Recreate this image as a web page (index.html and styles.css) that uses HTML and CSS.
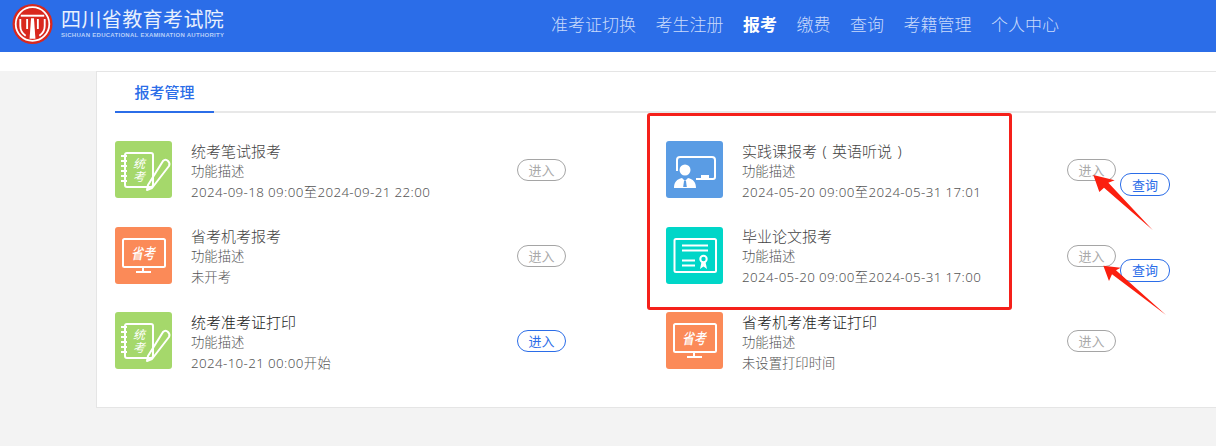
FILE: index.html
```html
<!DOCTYPE html>
<html lang="zh-CN">
<head>
<meta charset="utf-8">
<title>报考管理</title>
<link rel="stylesheet" href="styles.css">
</head>
<body>
<header class="header">
  <div class="brand">
    <svg class="logo" viewBox="0 0 42 42" aria-hidden="true">
      <circle cx="21" cy="21" r="20.5" fill="#d9281e"/>
      <circle cx="21" cy="21" r="17.2" fill="none" stroke="#fff" stroke-width="1.8"/>
      <path d="M9 12.5h24" stroke="#fff" stroke-width="2"/>
      <path d="M8.5 16v7c0 5 2.5 8 5.5 10M15.5 16v10M33.5 16v7c0 5-2.500 8-5.500 10M26.500 16v10" fill="none" stroke="#fff" stroke-width="1.900"/>
      <path d="M19.500 15h3l1.500 21h-6z" fill="#fff"/>
    </svg>
    <div class="brand-text">
      <div class="brand-name">四川省教育考试院</div>
      <div class="brand-en">SICHUAN EDUCATIONAL EXAMINATION AUTHORITY</div>
    </div>
  </div>
  <nav class="nav">
    <a class="nav-item">准考证切换</a>
    <a class="nav-item">考生注册</a>
    <a class="nav-item nav-active">报考</a>
    <a class="nav-item">缴费</a>
    <a class="nav-item">查询</a>
    <a class="nav-item">考籍管理</a>
    <a class="nav-item">个人中心</a>
  </nav>
</header>
<div class="strip"></div>
<main class="main">
  <section class="panel">
    <div class="tabs"><div class="tab">报考管理</div></div>
    <div class="grid">

      <div class="row">
        <div class="icon icon-green">
          <svg viewBox="0 0 57 57" aria-hidden="true">
            <rect x="10" y="12" width="28" height="34" rx="2" class="line"/>
            <path d="M6 15h6M6 20h6M6 25h6M6 30h6M6 35h6M6 40h6" class="line"/>
            <text x="24" y="16" class="glyph glyph-v">统考</text>
            <path d="M33 44l-1 5 5-2 17-22c1-2 0-4-1-5s-3-2-5 0z" class="pencil"/>
          </svg>
        </div>
        <div class="info">
          <div class="title">统考笔试报考</div>
          <div class="desc">功能描述</div>
          <div class="date">2024-09-18 09:00至2024-09-21 22:00</div>
        </div>
        <div class="actions"><button class="btn btn-gray">进入</button></div>
      </div>

      <div class="row">
        <div class="icon icon-blue">
          <svg viewBox="0 0 57 57" aria-hidden="true">
            <path d="M11 30V19c0-2 1-3 3-3h32c2 0 3 1 3 3v17c0 1-.5 2-2 2H30" class="line"/>
            <rect x="35" y="34" width="8" height="3" fill="#fff"/>
            <circle cx="19" cy="29" r="5.500" fill="#fff"/>
            <path d="M8 47c0-6 3-9 8-10l3 3 3-3c5 1 8 4 8 10z" fill="#fff"/>
            <path d="M18 40h2l.800 6h-3.600z" fill="#5a9ce4"/>
          </svg>
        </div>
        <div class="info">
          <div class="title">实践课报考<span class="paren">(</span>英语听说<span class="paren">)</span></div>
          <div class="desc">功能描述</div>
          <div class="date">2024-05-20 09:00至2024-05-31 17:01</div>
        </div>
        <div class="actions">
          <button class="btn btn-gray">进入</button>
          <button class="btn btn-blue btn-query">查询</button>
        </div>
      </div>

      <div class="row">
        <div class="icon icon-orange">
          <svg viewBox="0 0 57 57" aria-hidden="true">
            <rect x="8" y="12" width="42" height="28" rx="1.500" class="line"/>
            <path d="M28 41v3" class="line"/>
            <rect x="21" y="44" width="15" height="2" fill="#fff"/>
            <text x="20" y="32" class="glyph glyph-big" transform="scale(.8 1)">省考</text>
          </svg>
        </div>
        <div class="info">
          <div class="title">省考机考报考</div>
          <div class="desc">功能描述</div>
          <div class="date date-cjk">未开考</div>
        </div>
        <div class="actions"><button class="btn btn-gray">进入</button></div>
      </div>

      <div class="row">
        <div class="icon icon-teal">
          <svg viewBox="0 0 57 57" aria-hidden="true">
            <rect x="8.500" y="12" width="41.500" height="33" rx="1.500" class="line"/>
            <path d="M16 18.500h26M16 23.500h26M16 33.500h13M16 38.500h13" class="line"/>
            <circle cx="37.500" cy="32" r="3.200" class="line"/>
            <path d="M35.500 35l-1.500 7 3.500-2.500 3.500 2.500-1.500-7z" fill="#fff"/>
          </svg>
        </div>
        <div class="info">
          <div class="title">毕业论文报考</div>
          <div class="desc">功能描述</div>
          <div class="date">2024-05-20 09:00至2024-05-31 17:00</div>
        </div>
        <div class="actions">
          <button class="btn btn-gray">进入</button>
          <button class="btn btn-blue btn-query">查询</button>
        </div>
      </div>

      <div class="row">
        <div class="icon icon-green">
          <svg viewBox="0 0 57 57" aria-hidden="true">
            <rect x="10" y="12" width="28" height="34" rx="2" class="line"/>
            <path d="M6 15h6M6 20h6M6 25h6M6 30h6M6 35h6M6 40h6" class="line"/>
            <text x="24" y="16" class="glyph glyph-v">统考</text>
            <path d="M33 44l-1 5 5-2 17-22c1-2 0-4-1-5s-3-2-5 0z" class="pencil"/>
          </svg>
        </div>
        <div class="info">
          <div class="title title-dark">统考准考证打印</div>
          <div class="desc">功能描述</div>
          <div class="date">2024-10-21 00:00开始</div>
        </div>
        <div class="actions"><button class="btn btn-blue">进入</button></div>
      </div>

      <div class="row">
        <div class="icon icon-orange">
          <svg viewBox="0 0 57 57" aria-hidden="true">
            <rect x="8" y="12" width="42" height="28" rx="1.500" class="line"/>
            <path d="M28 41v3" class="line"/>
            <rect x="21" y="44" width="15" height="2" fill="#fff"/>
            <text x="20" y="32" class="glyph glyph-big" transform="scale(.8 1)">省考</text>
          </svg>
        </div>
        <div class="info">
          <div class="title title-dark">省考机考准考证打印</div>
          <div class="desc">功能描述</div>
          <div class="date date-cjk">未设置打印时间</div>
        </div>
        <div class="actions"><button class="btn btn-gray">进入</button></div>
      </div>

    </div>
    <div class="redbox"></div>
    <svg class="arrows" viewBox="0 0 528 540" aria-hidden="true">
      <polygon points="160,90 224,106 205,113 338,255 192,128 178,141" fill="#fb1f0f"/>
      <polygon points="190,362 242,368 228,376 378,510 216,388 207,408" fill="#fb1f0f"/>
    </svg>
  </section>
</main>
</body>
</html>
```

FILE: styles.css
```css
* { box-sizing: border-box; }
html, body { margin: 0; height: 100%; overflow: hidden; }
body {
  background: #f3f3f3;
  font-family: "Noto Sans", "Noto Sans CJK SC", sans-serif;
  color: #555;
}
.header {
  height: 52px;
  background: #2b6de8;
  display: flex;
  align-items: flex-start;
  padding-left: 12px;
}
.brand { display: flex; width: 539px; }
.logo { width: 41px; height: 42px; margin-top: 3px; flex: none; }
.brand-text { margin-left: 8px; color: #e8f0fd; }
.brand-name {
  font-size: 20px;
  line-height: 22px;
  margin-top: 9px;
  letter-spacing: .4px;
  white-space: nowrap;
}
.brand-en {
  font-family: "Liberation Sans", sans-serif;
  font-size: 6px;
  font-weight: 700;
  line-height: 9px;
  letter-spacing: .28px;
  white-space: nowrap;
  color: #b9d0f8;
}
.nav {
  display: flex;
  gap: 19.500px;
  font-size: 17px;
  font-weight: 300;
  line-height: 49px;
  color: #c8dafb;
}
.nav-active { color: #fff; font-weight: 700; }
.strip { height: 19px; background: #fff; }
.main { padding-left: 96px; }
.panel {
  position: relative;
  height: 337px;
  background: #fff;
  border: 1px solid #e5e5e5;
  border-right: 0;
  padding-left: 18px;
}
.tabs {
  height: 41px;
  border-bottom: 2px solid #e8e8e8;
  display: flex;
}
.tab {
  width: 99px;
  height: 41px;
  border-bottom: 2px solid #2b6de8;
  color: #2b6de8;
  font-size: 15px;
  font-weight: 500;
  line-height: 41px;
  text-align: center;
}
.grid {
  display: grid;
  grid-template-columns: 551px 1fr;
  grid-auto-rows: 85.500px;
  padding-top: 28px;
}
.row {
  display: grid;
  grid-template-columns: 57px 326px auto;
  column-gap: 19px;
  justify-content: start;
}
.row:nth-child(even) { grid-template-columns: 57px 325px auto; }
.row .actions { margin-left: -19px; }
.icon {
  width: 57px;
  height: 57px;
  border-radius: 3px;
}
.icon svg { display: block; width: 57px; height: 57px; }
.icon-green { background: #a5d86b; }
.icon-orange { background: #fb8a58; }
.icon-blue { background: #5a9ce4; }
.icon-teal { background: #00d6c8; }
.line { fill: none; stroke: #fff; stroke-width: 2; }
.pencil { fill: none; stroke: #fff; stroke-width: 2; stroke-linejoin: round; }
.glyph {
  fill: #fff;
  font-size: 12px;
  font-style: italic;
  font-family: "Noto Sans CJK SC", sans-serif;
}
.glyph-v { writing-mode: vertical-rl; letter-spacing: 1.500px; }
.glyph-big { font-size: 15px; font-weight: 500; }
.info { line-height: 20px; white-space: nowrap; margin-top: -.3px; }
.title { font-size: 15px; font-weight: 300; color: #444; }
.title-dark { color: #222; }
.paren { display: inline-block; width: 15px; text-align: center; }
.desc { font-size: 13.330px; font-weight: 300; }
.date { font-size: 13.330px; font-weight: 300; letter-spacing: .38px; margin-top: 1px; }
.date-cjk { letter-spacing: 0; }
.actions {
  display: flex;
  align-items: flex-start;
  padding-top: 18px;
}
.btn {
  width: 49px;
  height: 22px;
  padding: 0;
  background: #fff;
  border: 1px solid #a5a5a5;
  border-radius: 11px;
  color: #aaa;
  font-family: inherit;
  font-size: 13px;
  line-height: 20px;
}
.btn-blue { border-color: #2b6de8; color: #2b6de8; }
.btn-query { width: 50px; height: 23px; margin: 14px 0 0 4px; }
.redbox {
  position: absolute;
  left: 550px;
  top: 41px;
  width: 365px;
  height: 197px;
  border: 3px solid #f5201a;
  border-radius: 3px;
}
.arrows {
  position: absolute;
  left: 943px;
  top: 73px;
  width: 176px;
  height: 180px;
}
```
